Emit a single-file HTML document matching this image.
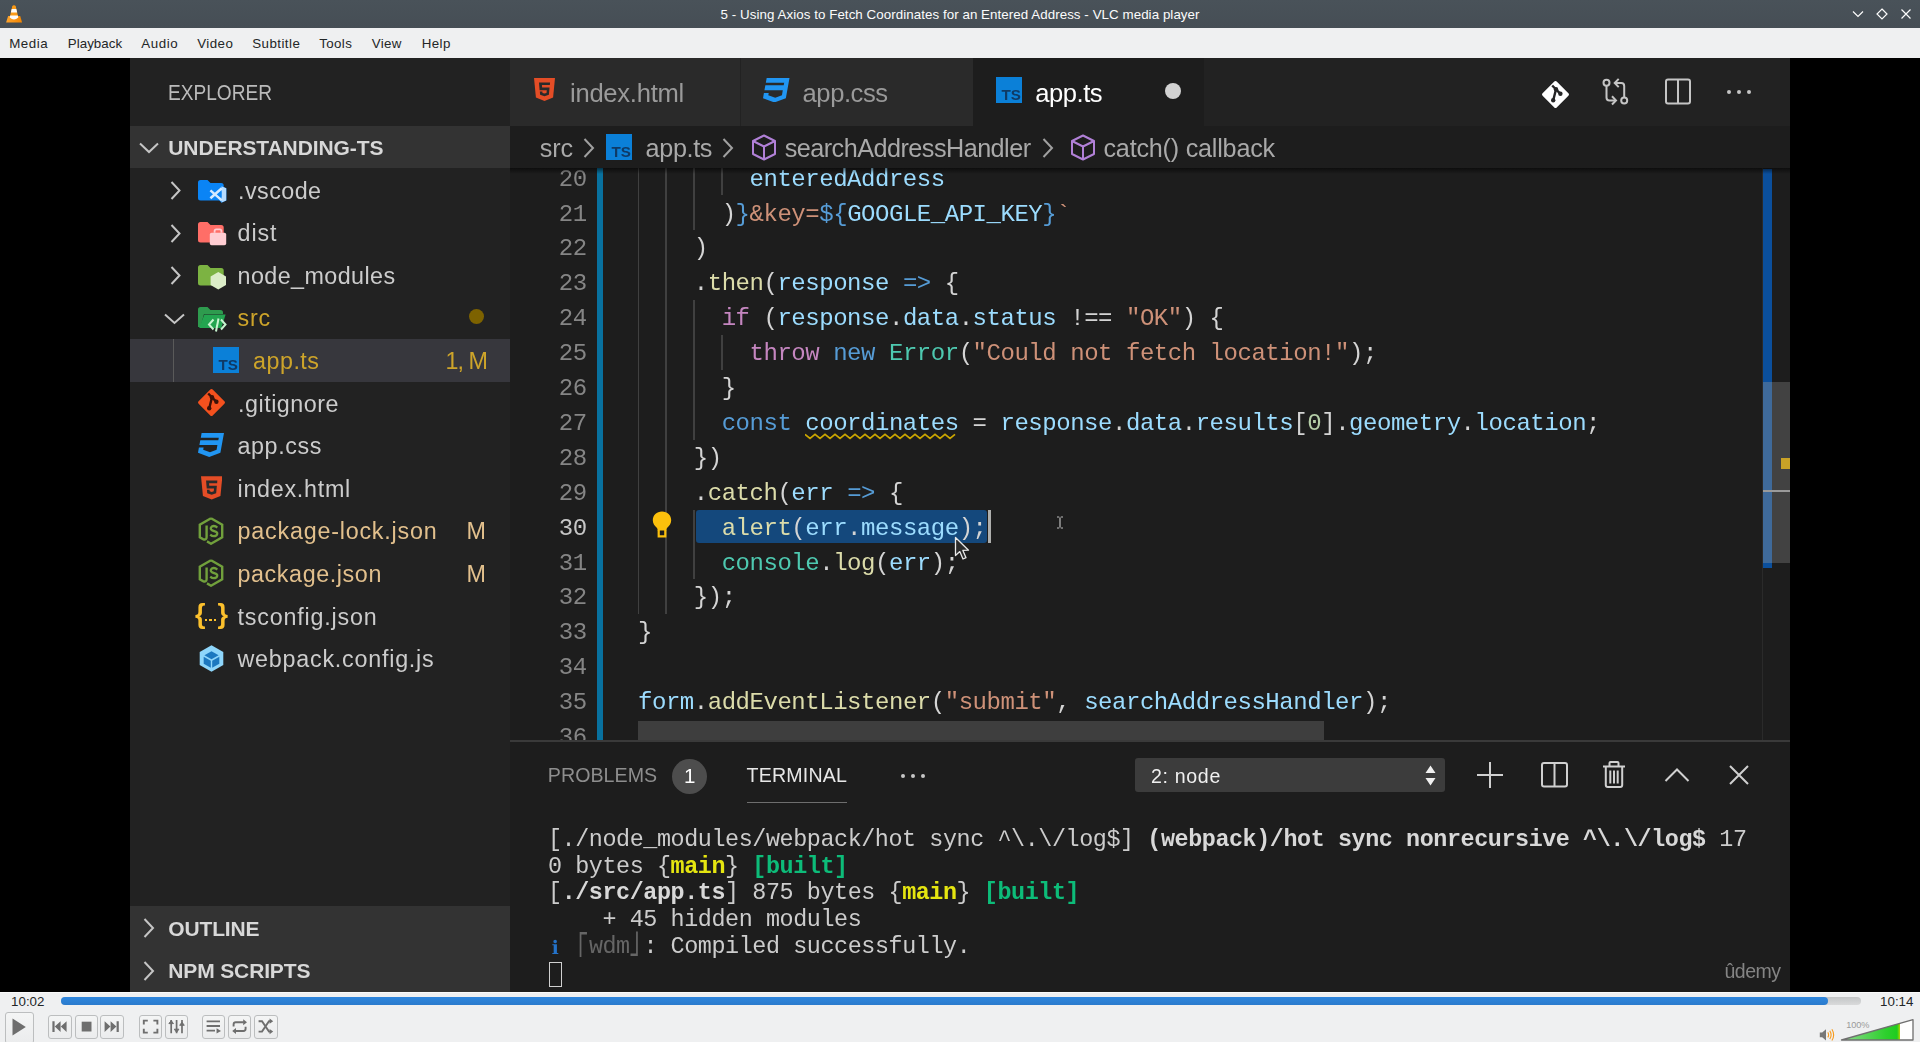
<!DOCTYPE html>
<html lang="en"><head><meta charset="utf-8">
<title>5 - Using Axios to Fetch Coordinates for an Entered Address - VLC media player</title>
<style>
html,body{margin:0;padding:0}
body{width:1920px;height:1042px;overflow:hidden;background:#eff0f1;position:relative;font-family:"Liberation Sans",sans-serif}
.t{position:absolute;white-space:pre;display:block}
.r{position:absolute;display:block}
#vs{position:absolute;left:0;top:58px;width:1920px;height:934px;overflow:hidden;filter:blur(0.55px)}
#vs>*{margin-top:-58px}
</style></head><body>
<div class="r" style="left:0.00px;top:0.00px;width:1920.00px;height:28.00px;background:#475057;background:linear-gradient(#495259,#464e55)"></div>
<div class="r" style="left:0.00px;top:28.00px;width:1920.00px;height:30.00px;background:#eff0f1;"></div>
<div class="r" style="left:0.00px;top:58.00px;width:1920.00px;height:934.00px;background:#000;"></div>
<div class="r" style="left:0.00px;top:992.00px;width:1920.00px;height:50.00px;background:#eff0f1;"></div>
<span class="t" style="left:720.60px;top:5.88px;font:13.33px/17px 'Liberation Sans',sans-serif;color:#fcfcfc;letter-spacing:0.062px;">5 - Using Axios to Fetch Coordinates for an Entered Address - VLC media player</span>
<svg class="r" style="left:0.00px;top:0.00px;" width="28.00" height="28.00" viewBox="0 0 28 28"><defs><linearGradient id="cg" x1="0" x2="1" y1="0" y2="0"><stop offset="0" stop-color="#ffa52e"/><stop offset="1" stop-color="#f28500"/></linearGradient></defs><path d="M8.1 15.9 L20.2 15.9 L22.1 22.5 L6.1 22.5 Z" fill="url(#cg)"/><path d="M14 5.300 Q15.4 5.3 15.8 6.6 L18.3 17.5 Q14 21.5 9.7 17.5 L12.2 6.6 Q12.6 5.3 14 5.300 Z" fill="#fb9a16"/><path d="M11.67 8.9 L16.33 8.9 L17.13 12.4 L10.87 12.4 Z" fill="#fbfbfb"/><path d="M10.14 15.6 L17.86 15.6 L18.3 17.5 Q14 21.300 9.7 17.5 Z" fill="#fbfbfb"/></svg>
<svg class="r" style="left:1850.00px;top:6.00px;" width="64.00" height="16.00" viewBox="0 0 64 16"><g fill="none" stroke="#fcfcfc" stroke-width="1.2"><path d="M3 5.5 L8 10.5 L13 5.5"/><path d="M32 3 L37 8 L32 13 L27 8 Z"/><path d="M51.5 3.5 L60.5 12.5 M60.5 3.5 L51.5 12.5"/></g></svg>
<span class="t" style="left:9.20px;top:34.98px;font:13.33px/17px 'Liberation Sans',sans-serif;color:#232627;letter-spacing:0.559px;">Media</span>
<span class="t" style="left:67.70px;top:34.98px;font:13.33px/17px 'Liberation Sans',sans-serif;color:#232627;letter-spacing:0.064px;">Playback</span>
<span class="t" style="left:141.20px;top:34.98px;font:13.33px/17px 'Liberation Sans',sans-serif;color:#232627;letter-spacing:0.601px;">Audio</span>
<span class="t" style="left:197.20px;top:34.98px;font:13.33px/17px 'Liberation Sans',sans-serif;color:#232627;letter-spacing:0.449px;">Video</span>
<span class="t" style="left:252.20px;top:34.98px;font:13.33px/17px 'Liberation Sans',sans-serif;color:#232627;letter-spacing:0.455px;">Subtitle</span>
<span class="t" style="left:319.20px;top:34.98px;font:13.33px/17px 'Liberation Sans',sans-serif;color:#232627;letter-spacing:0.396px;">Tools</span>
<span class="t" style="left:371.70px;top:34.98px;font:13.33px/17px 'Liberation Sans',sans-serif;color:#232627;letter-spacing:0.362px;">View</span>
<span class="t" style="left:421.70px;top:34.98px;font:13.33px/17px 'Liberation Sans',sans-serif;color:#232627;letter-spacing:0.421px;">Help</span>
<div id="vs">
<div class="r" style="left:130.00px;top:58.00px;width:380.00px;height:934.00px;background:#222222;"></div>
<div class="r" style="left:510.00px;top:58.00px;width:1280.00px;height:934.00px;background:#1d1d1d;"></div>
<div class="r" style="left:510.00px;top:58.00px;width:1280.00px;height:68.00px;background:#222222;"></div>
<div class="r" style="left:510.00px;top:58.00px;width:230.00px;height:68.00px;background:#2a2a2a;"></div>
<div class="r" style="left:741.00px;top:58.00px;width:231.50px;height:68.00px;background:#2a2a2a;"></div>
<div class="r" style="left:973.00px;top:58.00px;width:231.00px;height:68.00px;background:#1d1d1d;"></div>
<span class="t" style="left:168.00px;top:77.77px;font:22.3px/29px 'Liberation Sans',sans-serif;color:#bbbbbb;transform:scaleX(0.8563);transform-origin:0 0;">EXPLORER</span>
<div class="r" style="left:130.00px;top:126.00px;width:380.00px;height:42.00px;background:#333333;"></div>
<span class="t" style="left:168.30px;top:134.22px;font:21px/27px 'Liberation Sans',sans-serif;font-weight:700;color:#d8d8d8;letter-spacing:-0.100px;">UNDERSTANDING-TS</span>
<svg class="r" style="left:138.00px;top:140.75px;" width="22.00" height="13.50" viewBox="0 0 22 13.5"><path d="M2 2.5 L11.0 11.0 L20 2.5" fill="none" stroke="#c5c5c5" stroke-width="2" stroke-linejoin="miter"/></svg>
<div class="r" style="left:130.00px;top:338.50px;width:380.00px;height:43.00px;background:#37373d;"></div>
<div class="r" style="left:172.50px;top:338.50px;width:1.60px;height:43.00px;background:#5a5a5a;"></div>
<span class="t" style="left:238.00px;top:175.73px;font:23.3px/30px 'Liberation Sans',sans-serif;color:#cccccc;letter-spacing:0.457px;">.vscode</span>
<span class="t" style="left:237.50px;top:218.31px;font:23.3px/30px 'Liberation Sans',sans-serif;color:#cccccc;letter-spacing:0.935px;">dist</span>
<span class="t" style="left:237.50px;top:260.89px;font:23.3px/30px 'Liberation Sans',sans-serif;color:#cccccc;letter-spacing:0.428px;">node_modules</span>
<span class="t" style="left:237.50px;top:303.47px;font:23.3px/30px 'Liberation Sans',sans-serif;color:#cda42a;letter-spacing:0.814px;">src</span>
<span class="t" style="left:253.00px;top:346.05px;font:23.3px/30px 'Liberation Sans',sans-serif;color:#cda42a;letter-spacing:0.505px;">app.ts</span>
<span class="t" style="left:238.00px;top:388.63px;font:23.3px/30px 'Liberation Sans',sans-serif;color:#cccccc;letter-spacing:0.515px;">.gitignore</span>
<span class="t" style="left:237.50px;top:431.21px;font:23.3px/30px 'Liberation Sans',sans-serif;color:#cccccc;letter-spacing:0.600px;">app.css</span>
<span class="t" style="left:237.50px;top:473.79px;font:23.3px/30px 'Liberation Sans',sans-serif;color:#cccccc;letter-spacing:0.731px;">index.html</span>
<span class="t" style="left:237.50px;top:516.37px;font:23.3px/30px 'Liberation Sans',sans-serif;color:#e2c08d;letter-spacing:0.794px;">package-lock.json</span>
<span class="t" style="left:237.50px;top:558.95px;font:23.3px/30px 'Liberation Sans',sans-serif;color:#e2c08d;letter-spacing:0.599px;">package.json</span>
<span class="t" style="left:237.50px;top:601.53px;font:23.3px/30px 'Liberation Sans',sans-serif;color:#cccccc;letter-spacing:0.806px;">tsconfig.json</span>
<span class="t" style="left:237.50px;top:644.11px;font:23.3px/30px 'Liberation Sans',sans-serif;color:#cccccc;letter-spacing:0.770px;">webpack.config.js</span>
<span class="t" style="left:445.50px;top:346.05px;font:23.3px/30px 'Liberation Sans',sans-serif;color:#cda42a;letter-spacing:-0.954px;">1, M</span>
<span class="t" style="left:466.50px;top:516.37px;font:23.3px/30px 'Liberation Sans',sans-serif;color:#e2c08d;letter-spacing:0.591px;">M</span>
<span class="t" style="left:466.50px;top:558.95px;font:23.3px/30px 'Liberation Sans',sans-serif;color:#e2c08d;letter-spacing:0.591px;">M</span>
<div class="r" style="left:468.70px;top:309.10px;width:15.00px;height:15.00px;background:#7d6200;border-radius:50%"></div>
<svg class="r" style="left:168.50px;top:180.10px;" width="13.00" height="21.00" viewBox="0 0 13 21"><path d="M2.5 2 L10.5 10.5 L2.5 19" fill="none" stroke="#c5c5c5" stroke-width="2" stroke-linejoin="miter"/></svg>
<svg class="r" style="left:168.50px;top:222.68px;" width="13.00" height="21.00" viewBox="0 0 13 21"><path d="M2.5 2 L10.5 10.5 L2.5 19" fill="none" stroke="#c5c5c5" stroke-width="2" stroke-linejoin="miter"/></svg>
<svg class="r" style="left:168.50px;top:265.26px;" width="13.00" height="21.00" viewBox="0 0 13 21"><path d="M2.5 2 L10.5 10.5 L2.5 19" fill="none" stroke="#c5c5c5" stroke-width="2" stroke-linejoin="miter"/></svg>
<svg class="r" style="left:163.00px;top:311.79px;" width="23.00" height="13.50" viewBox="0 0 23 13.5"><path d="M2 2.5 L11.5 11.0 L21 2.5" fill="none" stroke="#c5c5c5" stroke-width="2" stroke-linejoin="miter"/></svg>
<div class="r" style="left:130.00px;top:905.50px;width:380.00px;height:86.50px;background:#333333;"></div>
<span class="t" style="left:168.30px;top:914.62px;font:21px/27px 'Liberation Sans',sans-serif;font-weight:700;color:#d8d8d8;letter-spacing:-0.166px;">OUTLINE</span>
<span class="t" style="left:168.30px;top:957.22px;font:21px/27px 'Liberation Sans',sans-serif;font-weight:700;color:#d8d8d8;letter-spacing:-0.138px;">NPM SCRIPTS</span>
<svg class="r" style="left:142.25px;top:917.00px;" width="13.50" height="22.00" viewBox="0 0 13.5 22"><path d="M2.5 2 L11.0 11.0 L2.5 20" fill="none" stroke="#c5c5c5" stroke-width="2" stroke-linejoin="miter"/></svg>
<svg class="r" style="left:142.25px;top:959.50px;" width="13.50" height="22.00" viewBox="0 0 13.5 22"><path d="M2.5 2 L11.0 11.0 L2.5 20" fill="none" stroke="#c5c5c5" stroke-width="2" stroke-linejoin="miter"/></svg>
<svg class="r" style="left:197.80px;top:179.60px;" width="30.00" height="26.00" viewBox="0 0 30 26"><path d="M0 2.5 Q0 0 2.5 0 L9.5 0 L12.5 3 L23.2 3 Q25.7 3 25.7 5.5 L25.7 17.9 Q25.7 20.4 23.2 20.4 L2.5 20.4 Q0 20.4 0 17.9 Z" fill="#0a84f5"/><g transform="translate(11.2 6)"><path d="M12.3 0 L17.2 2.2 L17.2 14.6 L12.3 16.8 L4.6 8.4 Z" fill="#0a84f5"/><path d="M12.3 0.2 L17 2.3 L17 14.4 L12.3 16.500 Z" fill="#b5dbff"/><path d="M12.6 2.2 L1.2 12.3 M12.6 14.4 L1.2 4.4" fill="none" stroke="#d4eaff" stroke-width="2.5"/><path d="M12.3 5.2 L12.3 11.600 L8 8.4 Z" fill="#0a84f5"/></g></svg>
<svg class="r" style="left:197.80px;top:222.18px;" width="30.00" height="26.00" viewBox="0 0 30 26"><path d="M0 2.5 Q0 0 2.5 0 L9.5 0 L12.5 3 L23.2 3 Q25.7 3 25.7 5.5 L25.7 17.9 Q25.7 20.4 23.2 20.4 L2.5 20.4 Q0 20.4 0 17.9 Z" fill="#ff6e67"/><rect x="11.8" y="10.8" width="16.4" height="12.4" rx="1.8" fill="#ffcdd2"/><path d="M16.6 10.8 L16.6 9 Q16.6 7.400 18.3 7.4 L21.7 7.4 Q23.4 7.4 23.4 9 L23.4 10.8" fill="none" stroke="#ffcdd2" stroke-width="1.8"/></svg>
<svg class="r" style="left:197.80px;top:264.76px;" width="30.00" height="27.00" viewBox="0 0 30 27"><path d="M0 2.5 Q0 0 2.5 0 L9.5 0 L12.5 3 L23.2 3 Q25.7 3 25.7 5.5 L25.7 17.9 Q25.7 20.4 23.2 20.4 L2.5 20.4 Q0 20.4 0 17.9 Z" fill="#7cb342"/><path d="M20.3 7 L28 11.4 L28 20 L20.3 24.4 L12.6 20 L12.6 11.4 Z" fill="#dcedc8"/></svg>
<svg class="r" style="left:197.60px;top:307.24px;" width="30.00" height="27.00" viewBox="0 0 30 27"><path d="M0 2.5 Q0 0 2.5 0 L9.5 0 L12.5 3 L22.5 3 Q25 3 25 5.5 L25 7 L6 7 L2.5 20 L0 20 Z" fill="#2e9b4e"/><path d="M6.3 7.6 L27.6 7.6 L23.3 21 L1.2 21 Z" fill="#23a550"/><g fill="none" stroke="#c8f5d0" stroke-width="2" stroke-linecap="butt"><path d="M15.5 12.5 L11 17.5 L15.5 22.5"/><path d="M23 12.5 L27.5 17.5 L23 22.5"/><path d="M20.5 11.5 L18 24.5"/></g></svg>
<svg class="r" style="left:213.40px;top:347.00px;" width="26.00" height="26.00" viewBox="0 0 26 26"><rect width="26" height="26" fill="#0b80d8"/><text x="5.6" y="23.4" font-family="Liberation Sans,sans-serif" font-weight="700" font-size="15" fill="#0f3a66" textLength="19.4" lengthAdjust="spacingAndGlyphs">TS</text></svg>
<svg class="r" style="left:197.60px;top:388.90px;" width="27.00" height="27.00" viewBox="0 0 27 27"><path d="M13.5 1.8 L25.2 13.5 L13.5 25.2 L1.8 13.5 Z" fill="#f4511e" stroke="#f4511e" stroke-width="3.4" stroke-linejoin="round"/><g fill="none" stroke="#3a1208" stroke-width="2.4"><path d="M10.2 4.5 L14 8.3 L11.3 19"/><path d="M14 8.3 L18.2 12.6"/></g><circle cx="14" cy="8.3" r="2.2" fill="#3a1208"/><circle cx="18.4" cy="12.8" r="2.2" fill="#3a1208"/><circle cx="11.2" cy="19.2" r="2.2" fill="#3a1208"/></svg>
<svg class="r" style="left:198.00px;top:433.00px;" width="26.00" height="24.00" viewBox="0 0 26 24"><path d="M3.6 0 L26 0 L22.4 19.8 L11.2 24 L0 19.8 L0.9 14.6 L5.6 14.6 L5.2 16.8 L12 19.3 L18.6 16.8 L19.4 12 L1.4 12 L2.3 7.2 L20.3 7.2 L20.8 4.7 L2.8 4.7 Z" fill="#2196f3"/></svg>
<svg class="r" style="left:200.50px;top:476.00px;" width="21.40" height="23.60" viewBox="0 0 22 24"><path d="M0 0 L22 0 L20 20.5 L11 24 L2 20.5 Z" fill="#e44d26"/><path d="M5.2 4.6 L16.8 4.6 L16.6 7.4 L8.3 7.4 L8.5 10 L16.3 10 L15.6 17.6 L11 19.2 L6.4 17.6 L6.1 14 L8.8 14 L8.9 15.6 L11 16.3 L13.1 15.6 L13.4 12.7 L5.9 12.7 Z" fill="#2a2a2a"/></svg>
<svg class="r" style="left:197.90px;top:516.80px;" width="26.00" height="28.00" viewBox="0 0 26 28"><path d="M13 1.3 L24.2 7.7 L24.2 20.3 L13 26.7 L9 24.4 M13 1.3 L1.8 7.7 L1.8 20.3 L5 22.1 Q8.6 23.6 8.6 20 L8.6 8.5" fill="none" stroke="#71a03c" stroke-width="2.4"/><path d="M19.3 10.6 Q16.6 8 13.8 9.6 Q11.8 11.3 13.6 13 Q15.2 14 17.6 14.6 Q20.4 15.8 18.6 18.2 Q15.4 20.4 12.2 17.6" fill="none" stroke="#71a03c" stroke-width="2.3"/></svg>
<svg class="r" style="left:197.90px;top:559.38px;" width="26.00" height="28.00" viewBox="0 0 26 28"><path d="M13 1.3 L24.2 7.7 L24.2 20.3 L13 26.7 L9 24.4 M13 1.3 L1.8 7.7 L1.8 20.3 L5 22.1 Q8.6 23.6 8.6 20 L8.6 8.5" fill="none" stroke="#71a03c" stroke-width="2.4"/><path d="M19.3 10.6 Q16.6 8 13.8 9.6 Q11.8 11.3 13.6 13 Q15.2 14 17.6 14.6 Q20.4 15.8 18.6 18.2 Q15.4 20.4 12.2 17.6" fill="none" stroke="#71a03c" stroke-width="2.3"/></svg>
<span class="t" style="left:195.00px;top:596.64px;font:27px/35px 'Liberation Sans',sans-serif;font-weight:700;color:#fbc02d;">{</span>
<span class="t" style="left:217.50px;top:596.64px;font:27px/35px 'Liberation Sans',sans-serif;font-weight:700;color:#fbc02d;">}</span>
<div class="r" style="left:205.30px;top:619.00px;width:2.20px;height:2.20px;background:#fbc02d;"></div>
<div class="r" style="left:209.40px;top:619.00px;width:2.20px;height:2.20px;background:#fbc02d;"></div>
<div class="r" style="left:213.50px;top:619.00px;width:2.20px;height:2.20px;background:#fbc02d;"></div>
<svg class="r" style="left:198.60px;top:645.00px;" width="25.00" height="27.00" viewBox="0 0 25 27"><path d="M12.5 0.3 L24.3 6.9 L24.3 20.1 L12.5 26.7 L0.7 20.1 L0.7 6.9 Z" fill="#8ed6fb"/><path d="M12.5 6.3 L19.6 10.3 L12.5 14.3 L5.4 10.3 Z" fill="#1c78c0"/><path d="M4.7 11.7 L11.8 15.7 L11.8 22.7 L4.7 18.7 Z" fill="#1c78c0"/><path d="M20.3 11.7 L13.2 15.7 L13.2 22.7 L20.3 18.7 Z" fill="#1c78c0"/></svg>
<svg class="r" style="left:533.60px;top:76.80px;" width="21.00" height="25.00" viewBox="0 0 22 24"><path d="M0 0 L22 0 L20 20.5 L11 24 L2 20.5 Z" fill="#e44d26"/><path d="M5.2 4.6 L16.8 4.6 L16.6 7.4 L8.3 7.4 L8.5 10 L16.3 10 L15.6 17.6 L11 19.2 L6.4 17.6 L6.1 14 L8.8 14 L8.9 15.6 L11 16.3 L13.1 15.6 L13.4 12.7 L5.9 12.7 Z" fill="#2a2a2a"/></svg>
<span class="t" style="left:570.00px;top:77.13px;font:25.6px/33px 'Liberation Sans',sans-serif;color:#9a9a9a;letter-spacing:-0.268px;">index.html</span>
<svg class="r" style="left:763.00px;top:77.50px;" width="26.52" height="24.48" viewBox="0 0 26 24"><path d="M3.6 0 L26 0 L22.4 19.8 L11.2 24 L0 19.8 L0.9 14.6 L5.6 14.6 L5.2 16.8 L12 19.3 L18.6 16.8 L19.4 12 L1.4 12 L2.3 7.2 L20.3 7.2 L20.8 4.7 L2.8 4.7 Z" fill="#2196f3"/></svg>
<span class="t" style="left:802.60px;top:77.13px;font:25.6px/33px 'Liberation Sans',sans-serif;color:#9a9a9a;letter-spacing:-0.461px;">app.css</span>
<svg class="r" style="left:996.20px;top:76.90px;" width="26.00" height="26.00" viewBox="0 0 26 26"><rect width="26" height="26" fill="#0b80d8"/><text x="5.6" y="23.4" font-family="Liberation Sans,sans-serif" font-weight="700" font-size="15" fill="#0f3a66" textLength="19.4" lengthAdjust="spacingAndGlyphs">TS</text></svg>
<span class="t" style="left:1035.20px;top:77.13px;font:25.6px/33px 'Liberation Sans',sans-serif;color:#ffffff;letter-spacing:-0.456px;">app.ts</span>
<div class="r" style="left:1165.30px;top:83.00px;width:16.00px;height:16.00px;background:#d2d2d2;border-radius:50%"></div>
<svg class="r" style="left:1541.60px;top:81.00px;" width="27.00" height="27.00" viewBox="0 0 27 27"><path d="M13.5 1.8 L25.2 13.5 L13.5 25.2 L1.8 13.5 Z" fill="#ffffff" stroke="#ffffff" stroke-width="3.4" stroke-linejoin="round"/><g fill="none" stroke="#252526" stroke-width="2.4"><path d="M10.2 4.5 L14 8.3 L11.3 19"/><path d="M14 8.3 L18.2 12.6"/></g><circle cx="14" cy="8.3" r="2.2" fill="#252526"/><circle cx="18.4" cy="12.8" r="2.2" fill="#252526"/><circle cx="11.2" cy="19.2" r="2.2" fill="#252526"/></svg>
<svg class="r" style="left:1601.00px;top:77.00px;" width="30.00" height="30.00" viewBox="0 0 30 30"><g fill="none" stroke="#c5c5c5" stroke-width="2"><circle cx="5.5" cy="5.8" r="3"/><circle cx="23.2" cy="23.6" r="3"/><path d="M5.5 8.8 L5.5 20.5 Q5.5 23.4 8.4 23.4 L14.5 23.4"/><path d="M11 19.3 L15 23.4 L11 27.5"/><path d="M23.2 20.6 L23.2 8.9 Q23.2 6 20.3 6 L14.2 6"/><path d="M17.7 1.9 L13.7 6 L17.7 10.1"/></g></svg>
<svg class="r" style="left:1664.00px;top:77.00px;" width="28.00" height="28.00" viewBox="0 0 28 28"><g fill="none" stroke="#c5c5c5" stroke-width="2"><rect x="2" y="2.4" width="24" height="24" rx="2"/><path d="M14 2.4 L14 26.4"/></g></svg>
<div class="r" style="left:1726.70px;top:89.60px;width:4.20px;height:4.20px;background:#c5c5c5;border-radius:50%"></div>
<div class="r" style="left:1736.90px;top:89.60px;width:4.20px;height:4.20px;background:#c5c5c5;border-radius:50%"></div>
<div class="r" style="left:1747.10px;top:89.60px;width:4.20px;height:4.20px;background:#c5c5c5;border-radius:50%"></div>
<span class="t" style="left:539.70px;top:131.77px;font:25.2px/33px 'Liberation Sans',sans-serif;color:#a9a9a9;letter-spacing:-0.031px;">src</span>
<svg class="r" style="left:582.45px;top:136.50px;" width="13.50" height="22.00" viewBox="0 0 13.5 22"><path d="M2.5 2 L11.0 11.0 L2.5 20" fill="none" stroke="#a0a0a0" stroke-width="2" stroke-linejoin="miter"/></svg>
<svg class="r" style="left:606.30px;top:134.30px;" width="26.00" height="26.00" viewBox="0 0 26 26"><rect width="26" height="26" fill="#0b80d8"/><text x="5.6" y="23.4" font-family="Liberation Sans,sans-serif" font-weight="700" font-size="15" fill="#0f3a66" textLength="19.4" lengthAdjust="spacingAndGlyphs">TS</text></svg>
<span class="t" style="left:645.60px;top:131.77px;font:25.2px/33px 'Liberation Sans',sans-serif;color:#a9a9a9;letter-spacing:-0.358px;">app.ts</span>
<svg class="r" style="left:721.45px;top:136.50px;" width="13.50" height="22.00" viewBox="0 0 13.5 22"><path d="M2.5 2 L11.0 11.0 L2.5 20" fill="none" stroke="#a0a0a0" stroke-width="2" stroke-linejoin="miter"/></svg>
<svg class="r" style="left:750.80px;top:133.80px;" width="26.00" height="27.00" viewBox="0 0 26 27"><g fill="none" stroke="#b180d7" stroke-width="2" stroke-linejoin="round"><path d="M13 1.5 L24 7 L24 20 L13 25.5 L2 20 L2 7 Z"/><path d="M2 7 L13 12.5 L24 7 M13 12.5 L13 25.5"/></g></svg>
<span class="t" style="left:784.70px;top:131.77px;font:25.2px/33px 'Liberation Sans',sans-serif;color:#a9a9a9;letter-spacing:-0.517px;">searchAddressHandler</span>
<svg class="r" style="left:1040.55px;top:136.50px;" width="13.50" height="22.00" viewBox="0 0 13.5 22"><path d="M2.5 2 L11.0 11.0 L2.5 20" fill="none" stroke="#a0a0a0" stroke-width="2" stroke-linejoin="miter"/></svg>
<svg class="r" style="left:1070.40px;top:133.80px;" width="26.00" height="27.00" viewBox="0 0 26 27"><g fill="none" stroke="#b180d7" stroke-width="2" stroke-linejoin="round"><path d="M13 1.5 L24 7 L24 20 L13 25.5 L2 20 L2 7 Z"/><path d="M2 7 L13 12.5 L24 7 M13 12.5 L13 25.5"/></g></svg>
<span class="t" style="left:1103.50px;top:131.77px;font:25.2px/33px 'Liberation Sans',sans-serif;color:#a9a9a9;letter-spacing:-0.222px;">catch() callback</span>
<div class="r" style="left:597.00px;top:168.00px;width:6.30px;height:573.00px;background:#08719f;"></div>
<div class="r" style="left:637.50px;top:168.00px;width:1.40px;height:27.45px;background:#404040;"></div>
<div class="r" style="left:665.38px;top:168.00px;width:1.40px;height:27.45px;background:#404040;"></div>
<div class="r" style="left:693.26px;top:168.00px;width:1.40px;height:27.45px;background:#404040;"></div>
<div class="r" style="left:721.14px;top:168.00px;width:1.40px;height:27.45px;background:#404040;"></div>
<div class="r" style="left:637.50px;top:195.45px;width:1.40px;height:34.90px;background:#404040;"></div>
<div class="r" style="left:665.38px;top:195.45px;width:1.40px;height:34.90px;background:#404040;"></div>
<div class="r" style="left:693.26px;top:195.45px;width:1.40px;height:34.90px;background:#404040;"></div>
<div class="r" style="left:637.50px;top:230.35px;width:1.40px;height:34.90px;background:#404040;"></div>
<div class="r" style="left:665.38px;top:230.35px;width:1.40px;height:34.90px;background:#404040;"></div>
<div class="r" style="left:637.50px;top:265.25px;width:1.40px;height:34.90px;background:#404040;"></div>
<div class="r" style="left:665.38px;top:265.25px;width:1.40px;height:34.90px;background:#404040;"></div>
<div class="r" style="left:637.50px;top:300.15px;width:1.40px;height:34.90px;background:#404040;"></div>
<div class="r" style="left:665.38px;top:300.15px;width:1.40px;height:34.90px;background:#404040;"></div>
<div class="r" style="left:693.26px;top:300.15px;width:1.40px;height:34.90px;background:#404040;"></div>
<div class="r" style="left:637.50px;top:335.05px;width:1.40px;height:34.90px;background:#404040;"></div>
<div class="r" style="left:665.38px;top:335.05px;width:1.40px;height:34.90px;background:#404040;"></div>
<div class="r" style="left:693.26px;top:335.05px;width:1.40px;height:34.90px;background:#404040;"></div>
<div class="r" style="left:721.14px;top:335.05px;width:1.40px;height:34.90px;background:#404040;"></div>
<div class="r" style="left:637.50px;top:369.95px;width:1.40px;height:34.90px;background:#404040;"></div>
<div class="r" style="left:665.38px;top:369.95px;width:1.40px;height:34.90px;background:#404040;"></div>
<div class="r" style="left:693.26px;top:369.95px;width:1.40px;height:34.90px;background:#404040;"></div>
<div class="r" style="left:637.50px;top:404.85px;width:1.40px;height:34.90px;background:#404040;"></div>
<div class="r" style="left:665.38px;top:404.85px;width:1.40px;height:34.90px;background:#404040;"></div>
<div class="r" style="left:693.26px;top:404.85px;width:1.40px;height:34.90px;background:#404040;"></div>
<div class="r" style="left:637.50px;top:439.75px;width:1.40px;height:34.90px;background:#404040;"></div>
<div class="r" style="left:665.38px;top:439.75px;width:1.40px;height:34.90px;background:#404040;"></div>
<div class="r" style="left:637.50px;top:474.65px;width:1.40px;height:34.90px;background:#404040;"></div>
<div class="r" style="left:665.38px;top:474.65px;width:1.40px;height:34.90px;background:#404040;"></div>
<div class="r" style="left:637.50px;top:509.55px;width:1.40px;height:34.90px;background:#404040;"></div>
<div class="r" style="left:665.38px;top:509.55px;width:1.40px;height:34.90px;background:#404040;"></div>
<div class="r" style="left:693.26px;top:509.55px;width:1.40px;height:34.90px;background:#404040;"></div>
<div class="r" style="left:637.50px;top:544.45px;width:1.40px;height:34.90px;background:#404040;"></div>
<div class="r" style="left:665.38px;top:544.45px;width:1.40px;height:34.90px;background:#404040;"></div>
<div class="r" style="left:693.26px;top:544.45px;width:1.40px;height:34.90px;background:#404040;"></div>
<div class="r" style="left:637.50px;top:579.35px;width:1.40px;height:34.90px;background:#404040;"></div>
<div class="r" style="left:665.38px;top:579.35px;width:1.40px;height:34.90px;background:#404040;"></div>
<div class="r" style="left:695.50px;top:509.60px;width:291.00px;height:33.60px;background:#14487c;border-radius:3px"></div>
<div class="r" style="left:988.00px;top:509.60px;width:2.60px;height:33.60px;background:#aeafad;"></div>
<span class="t" style="left:558.80px;top:163.60px;font:24px/31px 'Liberation Mono',monospace;letter-spacing:-0.462px;"><span style="color:#858585;">20</span></span>
<span class="t" style="left:558.80px;top:198.50px;font:24px/31px 'Liberation Mono',monospace;letter-spacing:-0.462px;"><span style="color:#858585;">21</span></span>
<span class="t" style="left:558.80px;top:233.40px;font:24px/31px 'Liberation Mono',monospace;letter-spacing:-0.462px;"><span style="color:#858585;">22</span></span>
<span class="t" style="left:558.80px;top:268.30px;font:24px/31px 'Liberation Mono',monospace;letter-spacing:-0.462px;"><span style="color:#858585;">23</span></span>
<span class="t" style="left:558.80px;top:303.20px;font:24px/31px 'Liberation Mono',monospace;letter-spacing:-0.462px;"><span style="color:#858585;">24</span></span>
<span class="t" style="left:558.80px;top:338.10px;font:24px/31px 'Liberation Mono',monospace;letter-spacing:-0.462px;"><span style="color:#858585;">25</span></span>
<span class="t" style="left:558.80px;top:373.00px;font:24px/31px 'Liberation Mono',monospace;letter-spacing:-0.462px;"><span style="color:#858585;">26</span></span>
<span class="t" style="left:558.80px;top:407.90px;font:24px/31px 'Liberation Mono',monospace;letter-spacing:-0.462px;"><span style="color:#858585;">27</span></span>
<span class="t" style="left:558.80px;top:442.80px;font:24px/31px 'Liberation Mono',monospace;letter-spacing:-0.462px;"><span style="color:#858585;">28</span></span>
<span class="t" style="left:558.80px;top:477.70px;font:24px/31px 'Liberation Mono',monospace;letter-spacing:-0.462px;"><span style="color:#858585;">29</span></span>
<span class="t" style="left:558.80px;top:512.60px;font:24px/31px 'Liberation Mono',monospace;letter-spacing:-0.462px;"><span style="color:#c6c6c6;">30</span></span>
<span class="t" style="left:558.80px;top:547.50px;font:24px/31px 'Liberation Mono',monospace;letter-spacing:-0.462px;"><span style="color:#858585;">31</span></span>
<span class="t" style="left:558.80px;top:582.40px;font:24px/31px 'Liberation Mono',monospace;letter-spacing:-0.462px;"><span style="color:#858585;">32</span></span>
<span class="t" style="left:558.80px;top:617.30px;font:24px/31px 'Liberation Mono',monospace;letter-spacing:-0.462px;"><span style="color:#858585;">33</span></span>
<span class="t" style="left:558.80px;top:652.20px;font:24px/31px 'Liberation Mono',monospace;letter-spacing:-0.462px;"><span style="color:#858585;">34</span></span>
<span class="t" style="left:558.80px;top:687.10px;font:24px/31px 'Liberation Mono',monospace;letter-spacing:-0.462px;"><span style="color:#858585;">35</span></span>
<span class="t" style="left:558.80px;top:722.00px;font:24px/31px 'Liberation Mono',monospace;letter-spacing:-0.462px;"><span style="color:#858585;">36</span></span>
<span class="t" style="left:749.52px;top:163.60px;font:24px/31px 'Liberation Mono',monospace;letter-spacing:-0.462px;"><span style="color:#9cdcfe;">enteredAddress</span></span>
<span class="t" style="left:721.64px;top:198.50px;font:24px/31px 'Liberation Mono',monospace;letter-spacing:-0.462px;"><span style="color:#d4d4d4;">)</span><span style="color:#569cd6;">}</span><span style="color:#ce9178;">&amp;key=</span><span style="color:#569cd6;">${</span><span style="color:#9cdcfe;">GOOGLE_API_KEY</span><span style="color:#569cd6;">}</span><span style="color:#ce9178;">`</span></span>
<span class="t" style="left:693.76px;top:233.40px;font:24px/31px 'Liberation Mono',monospace;letter-spacing:-0.462px;"><span style="color:#d4d4d4;">)</span></span>
<span class="t" style="left:693.76px;top:268.30px;font:24px/31px 'Liberation Mono',monospace;letter-spacing:-0.462px;"><span style="color:#d4d4d4;">.</span><span style="color:#dcdcaa;">then</span><span style="color:#d4d4d4;">(</span><span style="color:#9cdcfe;">response</span><span style="color:#d4d4d4;"> </span><span style="color:#569cd6;">=&gt;</span><span style="color:#d4d4d4;"> {</span></span>
<span class="t" style="left:721.64px;top:303.20px;font:24px/31px 'Liberation Mono',monospace;letter-spacing:-0.462px;"><span style="color:#c586c0;">if</span><span style="color:#d4d4d4;"> (</span><span style="color:#9cdcfe;">response</span><span style="color:#d4d4d4;">.</span><span style="color:#9cdcfe;">data</span><span style="color:#d4d4d4;">.</span><span style="color:#9cdcfe;">status</span><span style="color:#d4d4d4;"> !== </span><span style="color:#ce9178;">&quot;OK&quot;</span><span style="color:#d4d4d4;">) {</span></span>
<span class="t" style="left:749.52px;top:338.10px;font:24px/31px 'Liberation Mono',monospace;letter-spacing:-0.462px;"><span style="color:#c586c0;">throw</span><span style="color:#d4d4d4;"> </span><span style="color:#569cd6;">new</span><span style="color:#d4d4d4;"> </span><span style="color:#4ec9b0;">Error</span><span style="color:#d4d4d4;">(</span><span style="color:#ce9178;">&quot;Could not fetch location!&quot;</span><span style="color:#d4d4d4;">);</span></span>
<span class="t" style="left:721.64px;top:373.00px;font:24px/31px 'Liberation Mono',monospace;letter-spacing:-0.462px;"><span style="color:#d4d4d4;">}</span></span>
<span class="t" style="left:721.64px;top:407.90px;font:24px/31px 'Liberation Mono',monospace;letter-spacing:-0.462px;"><span style="color:#569cd6;">const</span><span style="color:#d4d4d4;"> </span><span style="color:#9cdcfe;">coordinates</span><span style="color:#d4d4d4;"> = </span><span style="color:#9cdcfe;">response</span><span style="color:#d4d4d4;">.</span><span style="color:#9cdcfe;">data</span><span style="color:#d4d4d4;">.</span><span style="color:#9cdcfe;">results</span><span style="color:#d4d4d4;">[</span><span style="color:#b5cea8;">0</span><span style="color:#d4d4d4;">]</span><span style="color:#d4d4d4;">.</span><span style="color:#9cdcfe;">geometry</span><span style="color:#d4d4d4;">.</span><span style="color:#9cdcfe;">location</span><span style="color:#d4d4d4;">;</span></span>
<span class="t" style="left:693.76px;top:442.80px;font:24px/31px 'Liberation Mono',monospace;letter-spacing:-0.462px;"><span style="color:#d4d4d4;">})</span></span>
<span class="t" style="left:693.76px;top:477.70px;font:24px/31px 'Liberation Mono',monospace;letter-spacing:-0.462px;"><span style="color:#d4d4d4;">.</span><span style="color:#dcdcaa;">catch</span><span style="color:#d4d4d4;">(</span><span style="color:#9cdcfe;">err</span><span style="color:#d4d4d4;"> </span><span style="color:#569cd6;">=&gt;</span><span style="color:#d4d4d4;"> {</span></span>
<span class="t" style="left:721.64px;top:512.60px;font:24px/31px 'Liberation Mono',monospace;letter-spacing:-0.462px;"><span style="color:#dcdcaa;">alert</span><span style="color:#d4d4d4;">(</span><span style="color:#9cdcfe;">err</span><span style="color:#d4d4d4;">.</span><span style="color:#9cdcfe;">message</span><span style="color:#d4d4d4;">);</span></span>
<span class="t" style="left:721.64px;top:547.50px;font:24px/31px 'Liberation Mono',monospace;letter-spacing:-0.462px;"><span style="color:#4ec9b0;">console</span><span style="color:#d4d4d4;">.</span><span style="color:#dcdcaa;">log</span><span style="color:#d4d4d4;">(</span><span style="color:#9cdcfe;">err</span><span style="color:#d4d4d4;">);</span></span>
<span class="t" style="left:693.76px;top:582.40px;font:24px/31px 'Liberation Mono',monospace;letter-spacing:-0.462px;"><span style="color:#d4d4d4;">});</span></span>
<span class="t" style="left:638.00px;top:617.30px;font:24px/31px 'Liberation Mono',monospace;letter-spacing:-0.462px;"><span style="color:#d4d4d4;">}</span></span>
<span class="t" style="left:638.00px;top:687.10px;font:24px/31px 'Liberation Mono',monospace;letter-spacing:-0.462px;"><span style="color:#9cdcfe;">form</span><span style="color:#d4d4d4;">.</span><span style="color:#dcdcaa;">addEventListener</span><span style="color:#d4d4d4;">(</span><span style="color:#ce9178;">&quot;submit&quot;</span><span style="color:#d4d4d4;">, </span><span style="color:#9cdcfe;">searchAddressHandler</span><span style="color:#d4d4d4;">);</span></span>
<svg class="r" style="left:805.28px;top:433.00px;" width="154.34" height="7.00" viewBox="0 0 154.3 7"><path d="M0.0 1.3 L5.0 5.3 L10.0 1.3 L15.0 5.3 L20.0 1.3 L25.0 5.3 L30.0 1.3 L35.0 5.3 L40.0 1.3 L45.0 5.3 L50.0 1.3 L55.0 5.3 L60.0 1.3 L65.0 5.3 L70.0 1.3 L75.0 5.3 L80.0 1.3 L85.0 5.3 L90.0 1.3 L95.0 5.3 L100.0 1.3 L105.0 5.3 L110.0 1.3 L115.0 5.3 L120.0 1.3 L125.0 5.3 L130.0 1.3 L135.0 5.3 L140.0 1.3 L145.0 5.3 L150.0 1.3" fill="none" stroke="#cca700" stroke-width="1.7"/></svg>
<svg class="r" style="left:652.00px;top:510.50px;" width="20.00" height="27.00" viewBox="0 0 20 27"><path d="M10 0.5 C4.6 0.5 0.8 4.4 0.8 9.3 C0.8 12.6 2.7 14.7 4.3 16.3 C5.4 17.4 5.6 18.3 5.6 19.4 L14.4 19.4 C14.4 18.3 14.6 17.4 15.7 16.3 C17.3 14.7 19.2 12.6 19.2 9.3 C19.2 4.4 15.4 0.5 10 0.5 Z" fill="#fcc00c"/><path d="M6.7 19 L6.7 25.3 L13.3 25.3 L13.3 19" fill="none" stroke="#fcc00c" stroke-width="2.2"/></svg>
<div class="r" style="left:510.00px;top:739.50px;width:1280.00px;height:252.50px;background:#1d1d1d;"></div>
<div class="r" style="left:637.50px;top:721.00px;width:686.00px;height:19.00px;background:#3e3e3e;"></div>
<div class="r" style="left:510.00px;top:740.00px;width:1280.00px;height:2.00px;background:#3a3a3a;"></div>
<div class="r" style="left:1762.00px;top:168.00px;width:1.00px;height:572.00px;background:#2a2a2a;"></div>
<div class="r" style="left:1763.00px;top:168.50px;width:9.00px;height:214.00px;background:#0b4f9c;"></div>
<div class="r" style="left:1763.00px;top:382.00px;width:27.00px;height:181.00px;background:#424242;"></div>
<div class="r" style="left:1763.00px;top:382.00px;width:9.00px;height:186.00px;background:#3f6a9a;"></div>
<div class="r" style="left:1763.00px;top:563.00px;width:9.00px;height:5.00px;background:#0b4f9c;"></div>
<div class="r" style="left:1780.50px;top:457.50px;width:9.50px;height:11.50px;background:#c9a227;"></div>
<div class="r" style="left:1763.00px;top:489.80px;width:27.00px;height:2.00px;background:#9a9a9a;"></div>
<div class="r" style="left:510.00px;top:168.00px;width:1280.00px;height:6.00px;background:transparent;background:linear-gradient(rgba(0,0,0,.55),rgba(0,0,0,0))"></div>
<svg class="r" style="left:954.00px;top:535.50px;" width="16.00" height="25.00" viewBox="0 0 16 25"><path d="M1.5 1.5 L1.5 19.5 L5.8 15.6 L9 23 L12 21.7 L8.9 14.4 L14.5 14.2 Z" fill="#2b2b2b" stroke="#e8e8e8" stroke-width="1.3" stroke-linejoin="round"/></svg>
<svg class="r" style="left:1055.50px;top:516.00px;" width="8.00" height="13.00" viewBox="0 0 8 13"><path d="M1 1 L3.2 1 M4.8 1 L7 1 M4 1.5 L4 11.5 M1 12 L3.2 12 M4.8 12 L7 12" fill="none" stroke="#bdbdbd" stroke-width="1.2"/></svg>
<span class="t" style="left:547.80px;top:763.31px;font:19.6px/25px 'Liberation Sans',sans-serif;color:#8e8e8e;letter-spacing:0.072px;">PROBLEMS</span>
<div class="r" style="left:671.70px;top:758.50px;width:35.50px;height:35.50px;background:#4d4d4d;border-radius:50%"></div>
<span class="t" style="left:683.90px;top:761.70px;font:20.5px/27px 'Liberation Sans',sans-serif;color:#ffffff;">1</span>
<span class="t" style="left:746.60px;top:763.31px;font:19.6px/25px 'Liberation Sans',sans-serif;color:#e7e7e7;letter-spacing:0.175px;">TERMINAL</span>
<div class="r" style="left:746.50px;top:801.80px;width:100.00px;height:1.60px;background:#6e6e6e;"></div>
<div class="r" style="left:901.00px;top:774.40px;width:3.80px;height:3.80px;background:#c5c5c5;border-radius:50%"></div>
<div class="r" style="left:911.00px;top:774.40px;width:3.80px;height:3.80px;background:#c5c5c5;border-radius:50%"></div>
<div class="r" style="left:921.00px;top:774.40px;width:3.80px;height:3.80px;background:#c5c5c5;border-radius:50%"></div>
<div class="r" style="left:1135.00px;top:758.40px;width:310.00px;height:34.00px;background:#3c3c3c;border-radius:3px"></div>
<span class="t" style="left:1151.00px;top:763.71px;font:19.6px/25px 'Liberation Sans',sans-serif;color:#f0f0f0;letter-spacing:0.658px;">2: node</span>
<svg class="r" style="left:1424.00px;top:764.00px;" width="13.00" height="23.00" viewBox="0 0 13 23"><path d="M6.5 1.5 L11.5 9 L1.5 9 Z M6.5 21.5 L11.5 14 L1.5 14 Z" fill="#f0f0f0"/></svg>
<svg class="r" style="left:1475.00px;top:760.00px;" width="30.00" height="30.00" viewBox="0 0 30 30"><path d="M15 2 L15 28 M2 15 L28 15" fill="none" stroke="#d0d0d0" stroke-width="2"/></svg>
<svg class="r" style="left:1539.50px;top:761.00px;" width="29.00" height="27.00" viewBox="0 0 29 27"><g fill="none" stroke="#d0d0d0" stroke-width="2"><rect x="2" y="2" width="25" height="23.5" rx="2"/><path d="M14.5 2 L14.5 25.5"/></g></svg>
<svg class="r" style="left:1601.00px;top:760.00px;" width="26.00" height="29.00" viewBox="0 0 26 29"><g fill="none" stroke="#d0d0d0" stroke-width="2"><path d="M2 6.5 L24 6.5"/><path d="M8.5 6 L8.5 3 Q8.5 2 9.5 2 L16.5 2 Q17.500 2 17.5 3 L17.5 6"/><path d="M4.8 7 L4.8 25 Q4.8 27 6.8 27 L19.2 27 Q21.2 27 21.2 25 L21.2 7"/><path d="M9.3 10.5 L9.3 23.5 M13 10.5 L13 23.5 M16.7 10.5 L16.7 23.5"/></g></svg>
<svg class="r" style="left:1663.00px;top:766.00px;" width="28.00" height="18.00" viewBox="0 0 28 18"><path d="M2.5 15 L14 3.5 L25.5 15" fill="none" stroke="#d0d0d0" stroke-width="2"/></svg>
<svg class="r" style="left:1727.00px;top:763.00px;" width="24.00" height="24.00" viewBox="0 0 24 24"><path d="M3 3 L21 21 M21 3 L3 21" fill="none" stroke="#d0d0d0" stroke-width="2"/></svg>
<span class="t" style="left:548.00px;top:824.76px;font:23.4px/30px 'Liberation Mono',monospace;letter-spacing:-0.417px;"><span style="color:#cccccc;">[./node_modules/webpack/hot sync ^\.\/log$] </span><span style="color:#d8d8d8;font-weight:700;">(webpack)/hot sync nonrecursive ^\.\/log$</span><span style="color:#cccccc;"> 17</span></span>
<span class="t" style="left:548.00px;top:851.61px;font:23.4px/30px 'Liberation Mono',monospace;letter-spacing:-0.417px;"><span style="color:#cccccc;">0 bytes {</span><span style="color:#e5e510;font-weight:700;">main</span><span style="color:#cccccc;">} </span><span style="color:#0dbc79;font-weight:700;">[built]</span></span>
<span class="t" style="left:548.00px;top:878.46px;font:23.4px/30px 'Liberation Mono',monospace;letter-spacing:-0.417px;"><span style="color:#cccccc;">[</span><span style="color:#d8d8d8;font-weight:700;">./src/app.ts</span><span style="color:#cccccc;">] 875 bytes {</span><span style="color:#e5e510;font-weight:700;">main</span><span style="color:#cccccc;">} </span><span style="color:#0dbc79;font-weight:700;">[built]</span></span>
<span class="t" style="left:548.00px;top:905.31px;font:23.4px/30px 'Liberation Mono',monospace;letter-spacing:-0.417px;"><span style="color:#cccccc;">    + 45 hidden modules</span></span>
<span class="t" style="left:551.60px;top:936.30px;font:18.5px/24px 'DejaVu Sans',sans-serif;color:#2472c8;">ℹ</span>
<span class="t" style="left:576.25px;top:929.87px;font:23px/30px 'Liberation Mono','Noto Sans CJK JP',monospace;color:#666666;transform:scaleY(1.645);transform-origin:0 1.3px;">｢</span>
<span class="t" style="left:588.88px;top:932.16px;font:23.4px/30px 'Liberation Mono',monospace;letter-spacing:-0.417px;"><span style="color:#666666;">wdm</span></span>
<span class="t" style="left:629.75px;top:929.87px;font:23px/30px 'Liberation Mono','Noto Sans CJK JP',monospace;color:#666666;transform:scaleY(1.61);transform-origin:0 17px;">｣</span>
<span class="t" style="left:643.38px;top:932.16px;font:23.4px/30px 'Liberation Mono',monospace;letter-spacing:-0.417px;"><span style="color:#cccccc;">: Compiled successfully.</span></span>
<div class="r" style="left:548.60px;top:961.50px;width:13.00px;height:25.50px;background:transparent;box-sizing:border-box;border:1.6px solid #d0d0d0"></div>
<span class="t" style="left:1724.50px;top:959.24px;font:19.5px/25px 'Liberation Sans',sans-serif;color:rgba(150,150,150,.85);letter-spacing:-0.506px;">ûdemy</span>
</div>
<div class="r" style="left:0.00px;top:991.50px;width:1920.00px;height:1.20px;background:#fafafa;"></div>
<span class="t" style="left:11.00px;top:992.68px;font:13.33px/17px 'Liberation Sans',sans-serif;color:#232627;letter-spacing:0.028px;">10:02</span>
<span class="t" style="left:1880.00px;top:992.68px;font:13.33px/17px 'Liberation Sans',sans-serif;color:#232627;letter-spacing:0.028px;">10:14</span>
<div class="r" style="left:61.00px;top:996.60px;width:1800.00px;height:8.40px;background:#cdcfd0;border-radius:4.2px;background:linear-gradient(#c3c5c6,#d9dadb)"></div>
<div class="r" style="left:61.00px;top:996.60px;width:1766.50px;height:8.40px;background:#2a7fd4;border-radius:4.2px;background:linear-gradient(#2e86dd,#2a7bcd)"></div>
<div class="r" style="left:4.70px;top:1012.30px;width:29.00px;height:32.00px;background:#f2f3f3;box-sizing:border-box;border:1px solid #bcbebf;border-radius:3px;background:linear-gradient(#f4f5f5,#ebeced)"></div>
<svg class="r" style="left:11.00px;top:1017.00px;" width="16.00" height="20.00" viewBox="0 0 16 20"><path d="M1.5 1.5 L14.8 10 L1.5 18.5 Z" fill="#6e6e6e"/></svg>
<div class="r" style="left:48.40px;top:1015.40px;width:23.20px;height:23.20px;background:#f2f3f3;box-sizing:border-box;border:1px solid #bcbebf;border-radius:3px;background:linear-gradient(#f4f5f5,#ebeced)"></div>
<div class="r" style="left:74.60px;top:1015.40px;width:23.20px;height:23.20px;background:#f2f3f3;box-sizing:border-box;border:1px solid #bcbebf;border-radius:3px;background:linear-gradient(#f4f5f5,#ebeced)"></div>
<div class="r" style="left:100.40px;top:1015.40px;width:23.20px;height:23.20px;background:#f2f3f3;box-sizing:border-box;border:1px solid #bcbebf;border-radius:3px;background:linear-gradient(#f4f5f5,#ebeced)"></div>
<div class="r" style="left:138.60px;top:1015.40px;width:23.20px;height:23.20px;background:#f2f3f3;box-sizing:border-box;border:1px solid #bcbebf;border-radius:3px;background:linear-gradient(#f4f5f5,#ebeced)"></div>
<div class="r" style="left:164.60px;top:1015.40px;width:23.20px;height:23.20px;background:#f2f3f3;box-sizing:border-box;border:1px solid #bcbebf;border-radius:3px;background:linear-gradient(#f4f5f5,#ebeced)"></div>
<div class="r" style="left:202.30px;top:1015.40px;width:23.20px;height:23.20px;background:#f2f3f3;box-sizing:border-box;border:1px solid #bcbebf;border-radius:3px;background:linear-gradient(#f4f5f5,#ebeced)"></div>
<div class="r" style="left:228.30px;top:1015.40px;width:23.20px;height:23.20px;background:#f2f3f3;box-sizing:border-box;border:1px solid #bcbebf;border-radius:3px;background:linear-gradient(#f4f5f5,#ebeced)"></div>
<div class="r" style="left:254.40px;top:1015.40px;width:23.20px;height:23.20px;background:#f2f3f3;box-sizing:border-box;border:1px solid #bcbebf;border-radius:3px;background:linear-gradient(#f4f5f5,#ebeced)"></div>
<svg class="r" style="left:48.40px;top:1015.40px;" width="23.20" height="23.20" viewBox="0 0 23.2 23.2"><path d="M4.4 6.3 L6.6 6.3 L6.6 16.9 L4.4 16.9 Z M12.6 6.3 L12.6 16.9 L6.8 11.6 Z M18.6 6.3 L18.6 16.9 L12.8 11.6 Z" fill="#6e6e6e"/></svg>
<svg class="r" style="left:74.60px;top:1015.40px;" width="23.20" height="23.20" viewBox="0 0 23.2 23.2"><rect x="6.7" y="6.7" width="9.8" height="9.8" fill="#6e6e6e"/></svg>
<svg class="r" style="left:100.40px;top:1015.40px;" width="23.20" height="23.20" viewBox="0 0 23.2 23.2"><path d="M18.8 6.3 L16.6 6.3 L16.6 16.9 L18.8 16.9 Z M10.6 6.3 L10.6 16.9 L16.4 11.6 Z M4.6 6.3 L4.6 16.9 L10.4 11.6 Z" fill="#6e6e6e"/></svg>
<svg class="r" style="left:138.60px;top:1015.40px;" width="23.20" height="23.20" viewBox="0 0 23.2 23.2"><path d="M4.8 9.4 L4.8 5.6 L8.8 5.6 M14.4 5.6 L18.4 5.6 L18.4 9.4 M18.4 13.8 L18.4 17.6 L14.4 17.6 M8.8 17.6 L4.8 17.6 L4.8 13.8" fill="none" stroke="#6e6e6e" stroke-width="1.9"/></svg>
<svg class="r" style="left:164.60px;top:1015.40px;" width="23.20" height="23.20" viewBox="0 0 23.2 23.2"><path d="M6.2 5 L6.2 18.2 M11.6 5 L11.6 18.2 M17 5 L17 18.2" fill="none" stroke="#6e6e6e" stroke-width="1.7"/><path d="M3.9 8.6 L8.5 8.6 L6.2 5.6 Z M9.3 14.2 L13.9 14.2 L11.6 17.4 Z M14.7 10.3 L19.3 10.3 L17 7.2 Z" fill="#6e6e6e" stroke="#6e6e6e" stroke-width="1"/></svg>
<svg class="r" style="left:202.30px;top:1015.40px;" width="23.20" height="23.20" viewBox="0 0 23.2 23.2"><path d="M4.6 6.4 L18 6.4 M4.6 11 L18 11 M4.6 15.6 L13 15.6" fill="none" stroke="#6e6e6e" stroke-width="1.8"/><path d="M14.6 13.2 L19 15.9 L14.6 18.6 Z" fill="#6e6e6e"/></svg>
<svg class="r" style="left:228.30px;top:1015.40px;" width="23.20" height="23.20" viewBox="0 0 23.2 23.2"><path d="M5.6 11.4 L5.6 9.4 Q5.6 7.2 7.8 7.2 L15.8 7.2 M17.6 11.8 L17.6 13.8 Q17.6 16 15.400 16 L7.4 16" fill="none" stroke="#6e6e6e" stroke-width="1.9"/><path d="M15.2 4.2 L19 7.2 L15.2 10.2 Z M8 13 L4.2 16 L8 19 Z" fill="#6e6e6e"/></svg>
<svg class="r" style="left:254.40px;top:1015.40px;" width="23.20" height="23.20" viewBox="0 0 23.2 23.2"><path d="M4.6 6.2 L8 6.2 L15 16.600 L17 16.6 M4.6 16.6 L8 16.6 L15 6.2 L17 6.2" fill="none" stroke="#6e6e6e" stroke-width="1.9"/><path d="M15.6 3.6 L19.2 6.2 L15.6 8.8 Z M15.6 14 L19.2 16.6 L15.6 19.2 Z" fill="#6e6e6e"/></svg>
<svg class="r" style="left:1819.00px;top:1028.00px;" width="17.00" height="14.00" viewBox="0 0 17 14"><path d="M0.8 4.6 L3.2 4.6 L7 1.2 L7 12.6 L3.2 9.2 L0.8 9.2 Z" fill="#777"/><path d="M8.8 4.4 Q10.4 6.9 8.8 9.4 M10.8 2.8 Q13.4 6.900 10.8 11 M12.9 1.3 Q16.4 6.900 12.9 12.500" fill="none" stroke="#f79a1c" stroke-width="1.1"/></svg>
<svg class="r" style="left:1840.00px;top:1017.00px;" width="76.00" height="25.00" viewBox="0 0 76 25"><defs><linearGradient id="vg" x1="0" x2="1" y1="0" y2="0"><stop offset="0" stop-color="#8fd98f"/><stop offset="0.75" stop-color="#2ed02e"/><stop offset="0.95" stop-color="#1fcc1f"/><stop offset="1" stop-color="#b0d800"/></linearGradient></defs><path d="M1.5 23 L73 2.6 L73 23 Z" fill="#ffffff"/><path d="M1.5 23 L60 6.3 L60 23 Z" fill="url(#vg)"/><path d="M1.5 23 L73 2.6 L73 23 Z" fill="none" stroke="#6f6f6f" stroke-width="1.3" stroke-linejoin="round"/></svg>
<span class="t" style="left:1846.30px;top:1018.81px;font:9.2px/12px 'Liberation Sans',sans-serif;color:#9a9a9a;letter-spacing:-0.133px;">100%</span>
</body></html>
